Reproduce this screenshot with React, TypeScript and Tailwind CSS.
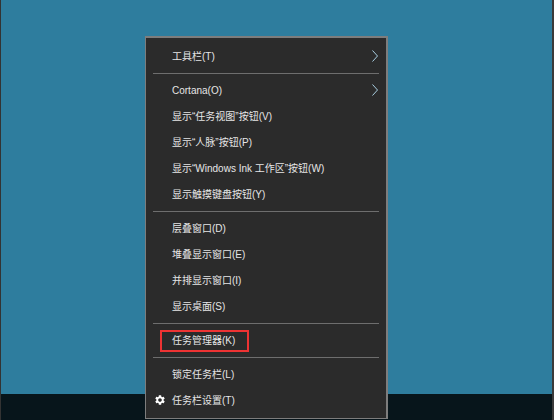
import { MdSettings } from 'react-icons/md'

const Divider = () => <div className="mx-[7px] mb-[3px] mt-[4px] h-px bg-[#6e6e6e]" />

const Item = ({ label, arrow, gear }: { label: string; arrow?: boolean; gear?: boolean }) => (
    <div className="relative flex h-[26px] items-center pl-[26px] text-[10px] text-[#e6e6e6]">
        {gear && <MdSettings className="absolute left-[8px] top-[7px] h-3 w-3 text-white" />}
        <span>{label}</span>
        {arrow && (
            <svg className="absolute left-[226px] top-[7px] h-3 w-[6px]" viewBox="0 0 6 12" fill="none">
                <path d="M0.5 0.5 L5.5 6 L0.5 11.5" stroke="#a9cfe2" strokeWidth="1" />
            </svg>
        )}
    </div>
)

export default function App() {
    return (
        <div
            className="relative flex h-[420px] w-[554px] flex-col overflow-hidden border-l border-r-2 border-l-[#333333] border-r-[#3a3a3a] bg-[#2e7d9e]"
            style={{ fontFamily: '"Liberation Sans", "Noto Sans CJK SC", sans-serif' }}
        >
            <div className="flex-1" />
            <div className="h-[26px] bg-[#07151b]" />
            <div className="absolute left-[144px] top-[36px] w-[243px] border border-t-2 border-r-2 border-[#7d7d7d] bg-[#2b2b2b] py-[5px]">
                <Item label="工具栏(T)" arrow />
                <Divider />
                <Item label="Cortana(O)" arrow />
                <Item label="显示“任务视图”按钮(V)" />
                <Item label="显示“人脉”按钮(P)" />
                <Item label="显示“Windows Ink 工作区”按钮(W)" />
                <Item label="显示触摸键盘按钮(Y)" />
                <Divider />
                <Item label="层叠窗口(D)" />
                <Item label="堆叠显示窗口(E)" />
                <Item label="并排显示窗口(I)" />
                <Item label="显示桌面(S)" />
                <Divider />
                <div className="relative">
                    <Item label="任务管理器(K)" />
                    <div className="absolute left-[14px] top-[3px] h-[22px] w-[89px] border-2 border-[#ee3333]" />
                </div>
                <Divider />
                <Item label="锁定任务栏(L)" />
                <Item label="任务栏设置(T)" gear />
            </div>
        </div>
    )
}
